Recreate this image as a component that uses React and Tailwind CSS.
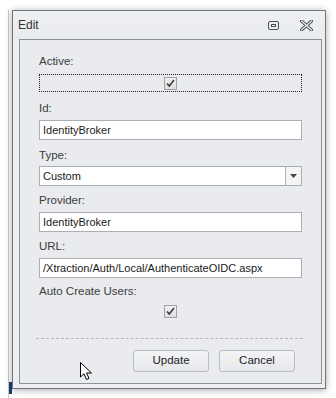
import React from "react";

const font = { fontFamily: '"Liberation Sans", Arial, sans-serif' };

function Check({ className = "" }) {
  return (
    <div className={"w-[13px] h-[13px] border border-[#9ea3aa] bg-gradient-to-b from-[#f2f2f2] to-[#dedede] flex items-center justify-center " + className}>
      <svg width="9" height="9" viewBox="0 0 9 9">
        <path d="M1 4.5 L3.3 7 L8 1" fill="none" stroke="#3a3a3a" strokeWidth="1.6" />
      </svg>
    </div>
  );
}

function Label({ children, className = "" }) {
  return <div className={"h-[15px] leading-[15px] text-[11.5px] text-[#3c3c3c] " + className}>{children}</div>;
}

function Input({ value, className = "" }) {
  return (
    <div className={"h-[20px] border border-[#a9aeb5] bg-white flex items-center pl-[3px] text-[11px] text-[#1a1a1a] " + className}>
      {value}
    </div>
  );
}

export default function App() {
  return (
    <div className="relative w-[336px] h-[398px] bg-white overflow-hidden" style={font}>
      <div className="absolute left-[8px] top-[10px] w-[1px] h-[388px] bg-[#c9cbce]" />
      <div className="absolute left-[9px] top-[382px] w-[3px] h-[12px] bg-[#1f3f73]" />
      <div className="relative ml-[12px] mt-[10px] w-[314px] h-[379px] border border-[#70767d] bg-[#eceef1] shadow-[0_1px_7px_rgba(0,0,0,0.35)] flex flex-col">
        <div className="h-[28px] flex items-center pl-[5px] pr-[12px] bg-gradient-to-b from-[#eef0f2] to-[#e9ebee]">
          <span className="text-[12px] text-[#333]">Edit</span>
          <div className="flex-1" />
          <svg width="11" height="9" viewBox="0 0 11 9" className="mr-[21px] mt-[1px]">
            <rect x="0.5" y="0.5" width="10" height="8" rx="1.5" fill="none" stroke="#4a4f55" />
            <rect x="3.5" y="3.5" width="4" height="2" fill="none" stroke="#4a4f55" />
          </svg>
          <svg width="13" height="11" viewBox="0 0 13 11" className="mt-[1px]">
            <path d="M1.5 1 L11.5 10 M11.5 1 L1.5 10" stroke="#4a4f55" strokeWidth="3.2" strokeLinecap="square" />
            <path d="M1.5 1 L11.5 10 M11.5 1 L1.5 10" stroke="#f4f5f6" strokeWidth="1.2" strokeLinecap="square" />
          </svg>
        </div>
        <div className="relative flex-1 ml-[6px] mr-[3px] mb-[4px] border border-[#8e939a] bg-[#e9ebee] pl-[19px] pr-[19px] pt-[14px] flex flex-col">
          <Label>Active:</Label>
          <div className="mt-[5px] h-[18px] border border-dotted border-[#222] flex items-center justify-center">
            <Check />
          </div>
          <Label className="mt-[9px]">Id:</Label>
          <Input className="mt-[4px]" value="IdentityBroker" />
          <Label className="mt-[8px]">Type:</Label>
          <div className="mt-[3px] h-[20px] border border-[#a9aeb5] bg-white flex items-center text-[11px] text-[#1a1a1a]">
            <span className="pl-[3px] flex-1">Custom</span>
            <div className="w-[16px] h-full border-l border-[#a9aeb5] bg-[#f4f4f4] flex items-center justify-center">
              <svg width="7" height="4" viewBox="0 0 7 4">
                <path d="M0 0 H7 L3.5 4 Z" fill="#444" />
              </svg>
            </div>
          </div>
          <Label className="mt-[7px]">Provider:</Label>
          <Input className="mt-[4px]" value="IdentityBroker" />
          <Label className="mt-[7px]">URL:</Label>
          <Input className="mt-[4px]" value="/Xtraction/Auth/Local/AuthenticateOIDC.aspx" />
          <Label className="mt-[6px]">Auto Create Users:</Label>
          <div className="mt-[6px] h-[13px] flex justify-center">
            <Check />
          </div>
          <div className="mt-[20px] -ml-[3px] -mr-[1px] border-t border-dashed border-[#b4b8bd]" />
          <div className="mt-[11px] flex justify-end gap-[10px] pr-[7px]">
            <div className="w-[76px] h-[22px] rounded-[3px] border border-[#b9bdc3] bg-gradient-to-b from-[#f3f4f6] to-[#e6e8eb] flex items-center justify-center text-[11.5px] text-[#222]">Update</div>
            <div className="w-[76px] h-[22px] rounded-[3px] border border-[#b9bdc3] bg-gradient-to-b from-[#f3f4f6] to-[#e6e8eb] flex items-center justify-center text-[11.5px] text-[#222]">Cancel</div>
          </div>
        </div>
      </div>
      <svg width="14" height="20" viewBox="0 0 14 20" className="absolute left-[80px] top-[362px]">
        <path d="M0.5 0.5 L0.5 15 L4 11.8 L6.5 17.5 L9 16.4 L6.6 11 L11.5 11 Z" fill="#fff" stroke="#000" strokeWidth="1" strokeLinejoin="round" />
      </svg>
    </div>
  );
}
